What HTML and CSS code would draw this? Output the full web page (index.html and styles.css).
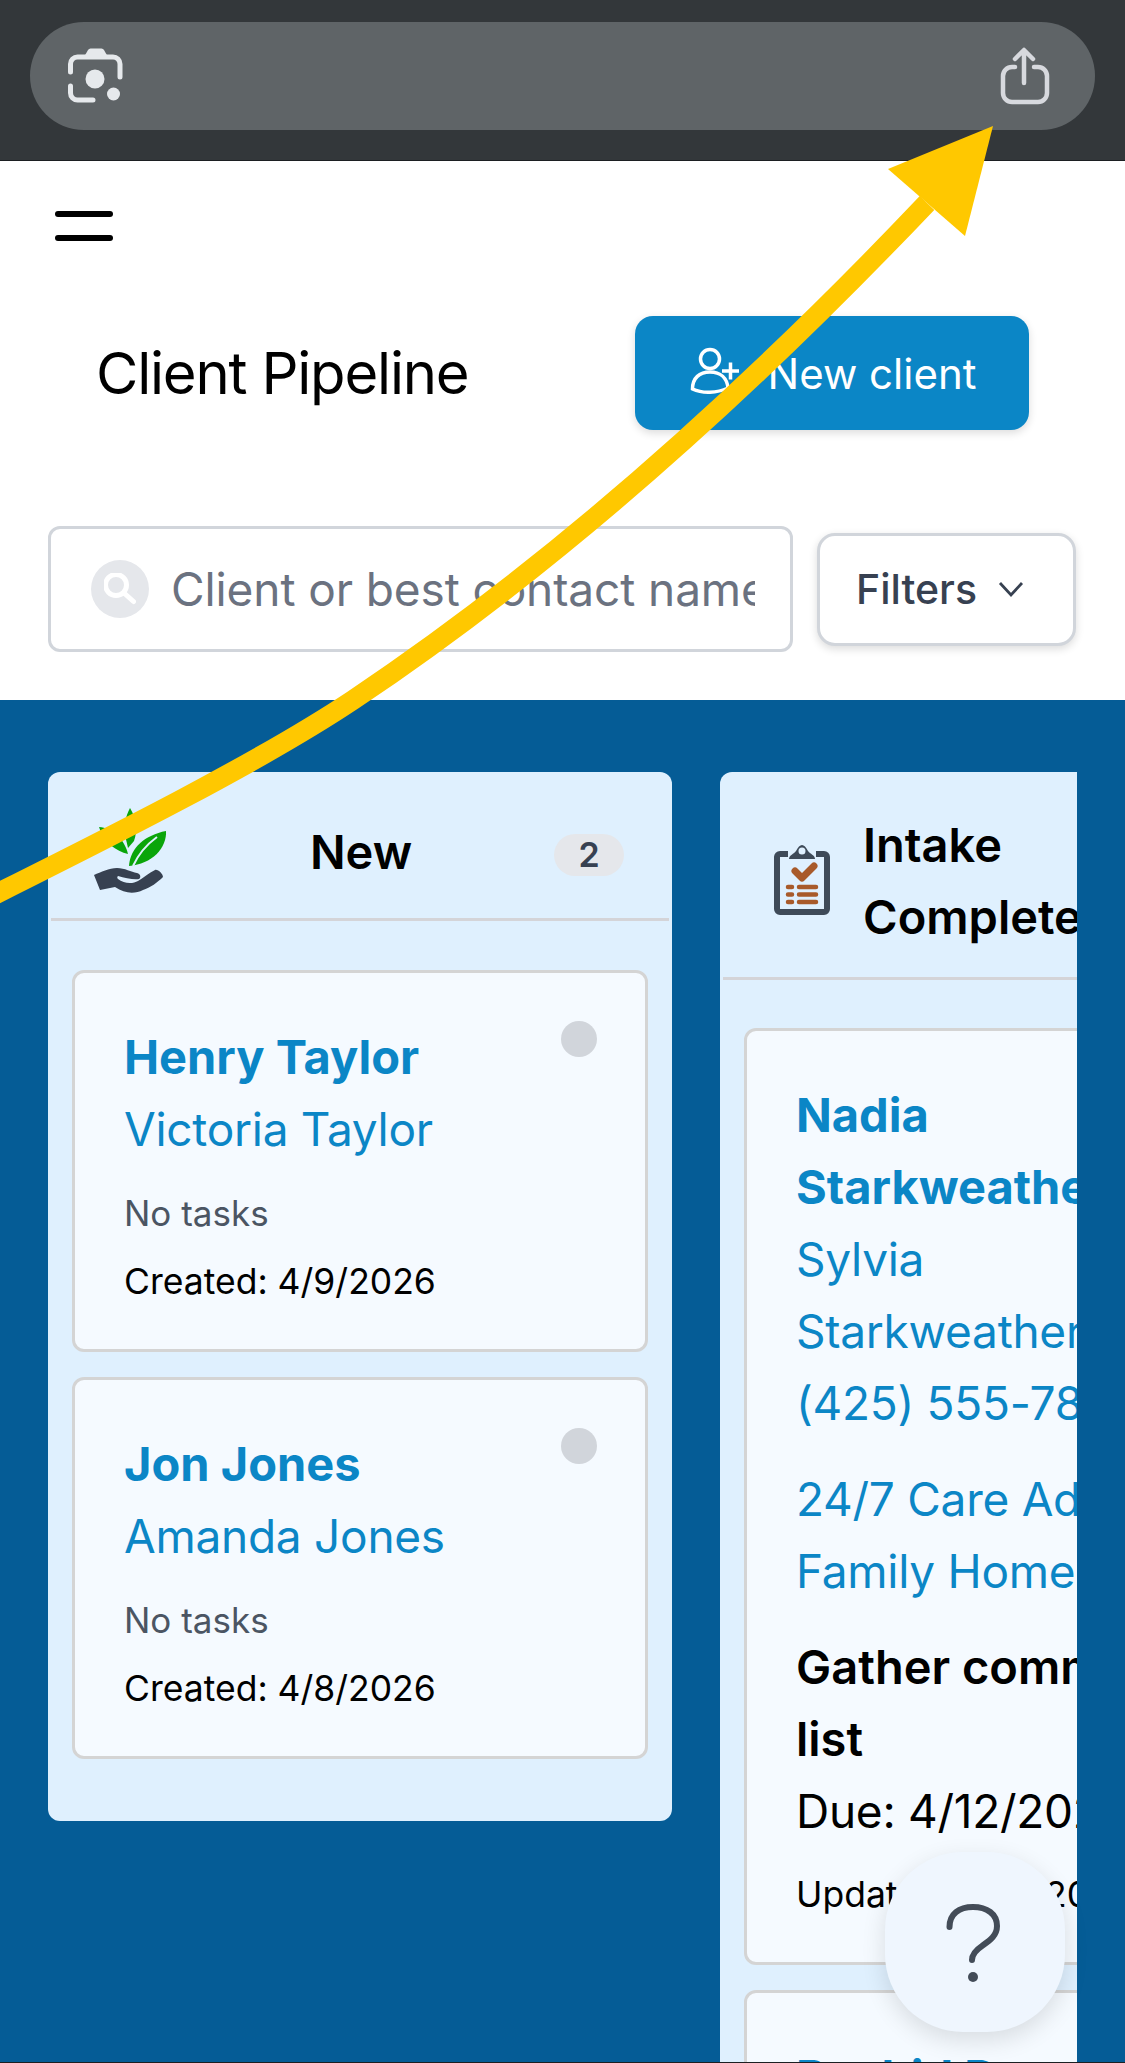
FILE: index.html
```html
<!DOCTYPE html>
<html lang="en">
<head>
<meta charset="utf-8">
<title>Client Pipeline</title>
<link rel="stylesheet" href="styles.css">
</head>
<body>
<div class="page">
  <div class="browser-bar">
    <div class="url-pill">
      <svg class="lens-icon" viewBox="64 44 62 62" width="62" height="62" aria-hidden="true">
        <path class="lens-line" d="M70.500 72V64a7 7 0 0 1 7-7h35.500a7 7 0 0 1 7 7v13"/>
        <path class="lens-line" d="M70.500 86v7a7 7 0 0 0 7 7h15.500"/>
        <path class="lens-fill" d="M84 57l4-7a3 3 0 0 1 2.500-1.500h11a3 3 0 0 1 2.500 1.500l4 7z"/>
        <circle class="lens-fill" cx="95" cy="79" r="9.500"/>
        <circle class="lens-fill" cx="113.500" cy="94" r="6.500"/>
      </svg>
      <svg class="share-icon" viewBox="998 45 54 62" width="54" height="62" aria-hidden="true">
        <path class="share-line" d="M1015 67h-3a9 9 0 0 0-9 9v17a9 9 0 0 0 9 9h26a9 9 0 0 0 9-9V76a9 9 0 0 0-9-9h-4"/>
        <path class="share-line" d="M1024 83V51M1015 59l9-9 9 9"/>
      </svg>
    </div>
  </div>

  <header class="top">
    <button class="menu" type="button" aria-label="Menu"><span></span><span></span></button>
    <div class="title-row">
      <h1>Client Pipeline</h1>
      <button class="primary" type="button">
        <svg viewBox="0 0 54 54" width="54" height="54" aria-hidden="true">
          <circle cx="20" cy="14" r="9.500"/>
          <path d="M2.500 44c0-11 7-17 17.500-17s17 6 18 16c-11 5-25 6-35.500 1z"/>
          <path d="M32 26h17M40.500 17.500v17"/>
        </svg>
        <span>New client</span>
      </button>
    </div>
    <div class="filter-row">
      <div class="search">
        <span class="search-badge">
          <svg viewBox="0 0 32 32" width="32" height="32" aria-hidden="true">
            <circle cx="12" cy="12" r="10.500"/>
            <path d="M20 20l9.500 8.500"/>
          </svg>
        </span>
        <span class="placeholder">Client or best contact name</span>
      </div>
      <button class="filters" type="button">
        <span>Filters</span>
        <svg viewBox="0 0 32 32" width="32" height="32" aria-hidden="true"><path d="M5 10l11 12 11-12"/></svg>
      </button>
    </div>
  </header>

  <main class="board">
    <div class="board-track">
      <section class="col">
        <div class="col-head">
          <svg class="stage-icon" viewBox="92 806 76 90" width="76" height="90" aria-hidden="true">
            <path class="leaf" d="M130 808C136 818 138 830 134 841L128 848 125 835C123 825 126 816 130 808Z"/>
            <path class="leaf" d="M99 827C112 828 124 838 128 854 116 851 104 843 99 827Z"/>
            <path class="leaf" d="M129 866C130 848 145 835 166 831 167 848 152 864 129 866Z"/>
            <path class="leaf-vein" d="M133 866C138 855 146 845 157 837"/>
            <path class="hand" d="M94 875C101 872 109 868 117 868 125 868 131 872 137 873 141 874 141 878 139 879 134 880 125 878 118 876 117 877 117 878 118 879 124 884 133 884 138 881 143 878 149 873 155 870 158 869 163 874 163 877 158 882 150 888 143 890 135 894 125 894 115 887L100 890Z"/>
          </svg>
          <h2 class="col-name">New</h2>
          <span class="count">2</span>
        </div>
        <div class="cards">
          <article class="card">
            <span class="status-dot"></span>
            <a class="client">Henry Taylor</a>
            <a class="contact">Victoria Taylor</a>
            <p class="muted">No tasks</p>
            <p class="small">Created: 4/9/2026</p>
          </article>
          <article class="card">
            <span class="status-dot"></span>
            <a class="client">Jon Jones</a>
            <a class="contact">Amanda Jones</a>
            <p class="muted">No tasks</p>
            <p class="small">Created: 4/8/2026</p>
          </article>
        </div>
      </section>

      <section class="col col-wide">
        <div class="col-head col-head-tall">
          <svg class="stage-icon-b" viewBox="772 843 60 74" width="60" height="74" aria-hidden="true">
            <path class="clip-frame" d="M788 854H780a3 3 0 0 0-3 3v52a3 3 0 0 0 3 3h44a3 3 0 0 0 3-3V857a3 3 0 0 0-3-3h-8"/>
            <path class="clip-top" fill-rule="evenodd" d="M789 859c0-4 5-5 7-8 2-4 4-6 6-6s4 2 6 6c2 3 7 4 7 8zM802 847.500a3.500 3.500 0 1 0 0 7 3.500 3.500 0 0 0 0-7z"/>
            <path class="clip-check" d="M795 871l7 7 12-12"/>
            <path class="clip-list" d="M788 887h4M799 887h17M788 894.500h4M799 894.500h17M788 902h4M799 902h17"/>
          </svg>
          <h2 class="col-name-left">Intake Complete</h2>
        </div>
        <div class="cards">
          <article class="card">
            <span class="status-dot"></span>
            <a class="client narrow">Nadia Starkweather</a>
            <a class="contact narrow">Sylvia Starkweather</a>
            <a class="contact narrow">(425) 555-7842</a>
            <a class="contact narrow community">24/7 Care Adult Family Home</a>
            <p class="task">Gather community list</p>
            <p class="due">Due: 4/12/2026</p>
            <p class="small updated">Updated: 4/10/2026</p>
          </article>
          <article class="card">
            <span class="status-dot"></span>
            <a class="client narrow">Rachid Daoud</a>
          </article>
        </div>
      </section>
    </div>
  </main>
</div>

<button class="help" type="button" aria-label="Help">
  <svg viewBox="0 0 60 84" width="60" height="84" aria-hidden="true">
    <path class="help-line" d="M6.500 27C6.500 14 16 7 30 7 44 7 54 14 54 26 54 36 46 41 39 46 33 50 29 54 29 60"/>
    <circle class="help-dot" cx="30" cy="77" r="5"/>
  </svg>
</button>

<svg class="annotation" viewBox="0 0 1125 2063" width="1125" height="2063" aria-hidden="true">
  <path class="arrow-shaft" d="M-10 897C110 837 260 762 353 700C543 573 737 403 927 203"/>
  <path class="arrow-head" d="M993 126 888 169 965 236z"/>
</svg>
</body>
</html>
```
FILE: styles.css
```css
* { box-sizing: border-box; }
html, body { margin: 0; padding: 0; height: 2063px; overflow: hidden; background: #fff; }
body { font-family: Inter, "Liberation Sans", sans-serif; color: #000; position: relative; }
p, h1, h2 { margin: 0; }
button { font-family: inherit; cursor: pointer; }

.page { height: 2063px; display: flex; flex-direction: column; border-bottom: 1px solid #1c1f22; overflow: hidden; }

.browser-bar { height: 161px; flex: none; background: #33373a; border-bottom: 1px solid #1c1f22; padding: 22px 30px 0; }
.url-pill { height: 108px; border-radius: 54px; background: #5f6467; display: flex; align-items: center; justify-content: space-between; padding: 0 43px 0 34px; }
.lens-icon { display: block; margin-bottom: 2px; }
.share-icon { display: block; }
.lens-line { fill: none; stroke: #e6e9ec; stroke-width: 5; stroke-linecap: round; }
.lens-fill { fill: #e6e9ec; }
.share-line { fill: none; stroke: #d7d9de; stroke-width: 4.500; stroke-linecap: round; stroke-linejoin: round; }

.top { height: 539px; flex: none; background: #fff; padding: 50px 48px 0; display: flex; flex-direction: column; }
.menu { width: 58px; height: 30px; padding: 0; border: 0; background: none; margin-left: 7px; display: flex; flex-direction: column; justify-content: space-between; }
.menu span { display: block; height: 6px; border-radius: 3px; background: #000; width: 58px; }
.title-row { display: flex; align-items: center; justify-content: space-between; margin-top: 75px; padding: 0 48px 0 48px; }
h1 { font-size: 58px; font-weight: 400; line-height: 84px; letter-spacing: -1.200px; }
.primary { width: 394px; height: 114px; border: 0; border-radius: 18px; background: #0b86c6; color: #fff; display: flex; align-items: center; justify-content: center; gap: 24px; font-size: 42px; box-shadow: 0 3px 8px rgba(0, 0, 0, .14); padding: 0 0 0 2px; }
.primary svg { fill: none; stroke: #fff; stroke-width: 3.500; flex: none; margin-top: -2px; }
.filter-row { display: flex; align-items: center; gap: 24px; margin-top: 96px; }
.search { width: 745px; height: 126px; flex: none; border: 3px solid #d1d5db; border-radius: 12px; display: flex; align-items: center; padding: 0 35px 0 40px; gap: 22px; overflow: hidden; }
.search-badge { width: 58px; height: 58px; flex: none; border-radius: 50%; background: #e5e7eb; display: flex; align-items: center; justify-content: center; }
.search-badge svg { fill: none; stroke: #fff; stroke-width: 5; stroke-linecap: round; }
.placeholder { font-size: 46px; letter-spacing: -0.1px; color: #6b7280; white-space: nowrap; overflow: hidden; flex: 1; min-width: 0; padding-bottom: 1px; }
.filters { width: 259px; height: 113px; flex: none; border: 3px solid #d1d5db; border-radius: 18px; background: #fff; color: #374151; display: flex; align-items: center; justify-content: center; gap: 18px; font-size: 41px; font-weight: 500; box-shadow: 0 3px 8px rgba(0, 0, 0, .14); padding: 0 10px 0 0; }
.filters svg { fill: none; stroke: #374151; stroke-width: 2.800; }

.board { flex: 1; min-height: 0; background: #055c96; padding: 72px 48px 0; overflow: hidden; }
.board-track { display: flex; gap: 48px; align-items: flex-start; overflow: hidden; height: 100%; }
.col { width: 624px; flex: none; background: #dff0fe; border-radius: 12px; padding: 0 3px 62px; }
.col-head { height: 149px; border-bottom: 3px solid #d4d4d8; display: flex; align-items: center; padding: 0 45px 0 41px; margin-bottom: 49px; }
.col-head-tall { height: 208px; padding: 0 0 0 49px; gap: 31px; margin-bottom: 48px; }
.stage-icon { flex: none; margin-top: 12px; }
.stage-icon-b { flex: none; margin-top: 11px; }
.leaf { fill: #0aa50a; }
.leaf-vein { fill: none; stroke: #dff0fe; stroke-width: 2; }
.hand { fill: #374151; }
.clip-frame { fill: none; stroke: #3e4a58; stroke-width: 6; }
.clip-top { fill: #3e4a58; }
.clip-check { fill: none; stroke: #a85a2a; stroke-width: 7; stroke-linecap: round; stroke-linejoin: round; }
.clip-list { fill: none; stroke: #a85a2a; stroke-width: 4.500; stroke-linecap: round; }
.col-name { flex: 1; text-align: center; font-size: 47px; font-weight: 600; line-height: 72px; margin-top: 14px; }
.col-name-left { flex: none; width: 250px; font-size: 47px; font-weight: 600; line-height: 72px; margin-top: 13px; }
.count { width: 70px; height: 42px; flex: none; border-radius: 21px; background: #e5e7eb; color: #374151; font-size: 34px; font-weight: 600; text-align: center; line-height: 42px; margin-top: 20px; }

.cards { display: flex; flex-direction: column; gap: 25px; padding: 0 21px; }
.card { position: relative; border: 3px solid #d4d4d4; border-radius: 12px; background: #f5faff; padding: 48px 49px 43px; display: flex; flex-direction: column; }
.status-dot { position: absolute; top: 48px; right: 48px; width: 36px; height: 36px; border-radius: 50%; background: #d1d5db; }
.client { font-size: 47px; font-weight: 700; line-height: 72px; color: #0b86c6; }
.contact { font-size: 46px; font-weight: 400; line-height: 72px; letter-spacing: -0.27px; color: #0b86c6; }
.narrow { width: 400px; }
.muted { font-size: 35px; line-height: 48px; color: #4b5563; margin-top: 24px; }
.small { font-size: 35.500px; line-height: 48px; color: #000; margin-top: 21px; }
.updated { margin-top: 24px; }
.community { margin-top: 24px; }
.task { font-size: 47px; font-weight: 600; line-height: 72px; margin-top: 24px; }
.due { font-size: 46px; line-height: 72px; letter-spacing: -0.27px; }

.help { position: absolute; left: 885px; top: 1852px; width: 180px; height: 180px; border: 0; padding: 0 5px 0 0; background: #eff6fe; border-radius: 78px; box-shadow: 0 8px 24px rgba(0, 0, 0, .12); display: flex; align-items: center; justify-content: center; }
.help-line { fill: none; stroke: #434c58; stroke-width: 6; stroke-linecap: round; }
.help-dot { fill: #434c58; }

.annotation { position: absolute; left: 0; top: 0; pointer-events: none; }
.arrow-shaft { fill: none; stroke: #ffc800; stroke-width: 20; }
.arrow-head { fill: #ffc800; }
```
